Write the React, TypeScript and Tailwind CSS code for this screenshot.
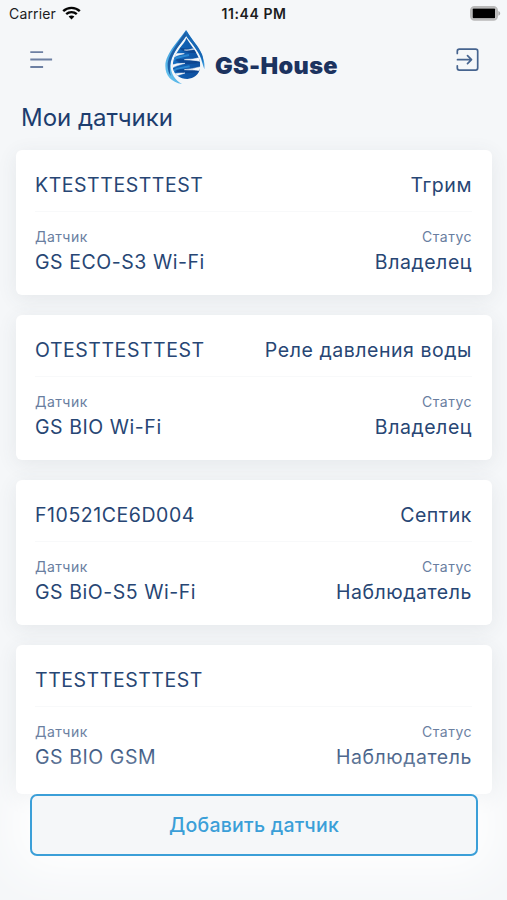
type Sensor = { id: string; name: string; model: string; status: string };

const sensors: Sensor[] = [
  { id: 'KTESTTESTTEST', name: 'Тгрим', model: 'GS ECO-S3 Wi-Fi', status: 'Владелец' },
  { id: 'OTESTTESTTEST', name: 'Реле давления воды', model: 'GS BIO Wi-Fi', status: 'Владелец' },
  { id: 'F10521CE6D004', name: 'Септик', model: 'GS BiO-S5 Wi-Fi', status: 'Наблюдатель' },
  { id: 'TTESTTESTTEST', name: '', model: 'GS BIO GSM', status: 'Наблюдатель' },
];

function StatusBar() {
  return (
    <div className="grid h-7 grid-cols-3 items-center pl-[9px] pr-[6px] text-[#1c1c1e]">
      <div className="-mt-[2px] flex items-center gap-[6px]">
        <span className="text-[14px] tracking-[0.15px]">Carrier</span>
        <svg width="19" height="14" viewBox="0 0 19 14" fill="none" stroke="#050505">
          <path d="M1.2 5.2C5.8.7 13.2.7 17.8 5.2" strokeWidth="2.4" />
          <path d="M4.2 8.2c3-2.900 7.600-2.900 10.600 0" strokeWidth="2.3" />
          <path d="M9.500 13.600 6.600 10.600c1.600-1.500 4.200-1.500 5.800 0z" fill="#050505" stroke="none" />
        </svg>
      </div>
      <span className="-mt-px mr-[2px] text-center text-[14px] font-semibold tracking-[0.6px]">11:44 PM</span>
      <svg width="31" height="15" viewBox="0 0 31 15" className="-mt-[2px] ml-auto">
        <rect x="1" y="1" width="26" height="12.800" rx="3.500" fill="#eee" stroke="#b9b9b9" strokeWidth="2" />
        <rect x="2.600" y="2.600" width="22.600" height="9.600" rx="1" fill="#000" />
        <path d="M28.400 5c2.400 1 2.400 3.800 0 4.800z" fill="#a8a8a8" />
      </svg>
    </div>
  );
}

function Logo() {
  return (
    <div className="flex items-start">
      <svg width="44" height="60" viewBox="0 0 132 180">
        <defs>
          <linearGradient id="shell" x1="0" y1="1" x2="1" y2="0">
            <stop offset="0" stopColor="#6cc8f0" />
            <stop offset="0.5" stopColor="#3a9adb" />
            <stop offset="1" stopColor="#2a86d4" />
          </linearGradient>
          <linearGradient id="core" x1="0" y1="0" x2="1" y2="0.3">
            <stop offset="0" stopColor="#1f86d6" />
            <stop offset="0.45" stopColor="#1160b2" />
            <stop offset="1" stopColor="#0d4f9f" />
          </linearGradient>
          <clipPath id="coreClip">
            <path d="M70 33c8 15 24 32 33 51 8 14 10 27 8 40-3 19-18 31-38 32-22 0-40-12-43-32-3-22 7-42 19-59 9-12 18-20 21-32z" />
          </clipPath>
        </defs>
        <path d="M69 9C52 36 7 78 7 117c0 29 18 49 50 54-20-11-34-30-34-56C23 82 53 49 70 27c18 24 40 48 47 78l7 22c6-44-32-80-55-118z" fill="url(#shell)" />
        <path d="M68 12C53 39 14 80 14 115c0 13 3 24 9 32-6-29 0-52 14-75 10-17 23-31 33-46z" fill="#1d5fa6" />
        <path d="M70 10c12 24 37 47 47 72 3 8 4 16 3 25-8-30-33-56-51-81z" fill="#1867b4" />
        <g clipPath="url(#coreClip)">
          <path d="M20 30h100v130H20z" fill="url(#core)" />
          <path d="M46 59c14 8 28 3 46 8l14 10c-20 3-50-1-60-18zM30 89c18 13 55 2 82 16-20 10-73 9-82-16zM28 122c20 11 58-2 84 8-20 13-76 13-84-8z" fill="#0a3c84" opacity="0.6" />
          <path d="M32 98c12-10 30-9 46-14M30 132c14-11 32-9 50-14" fill="none" stroke="#3ba3e8" strokeWidth="6" opacity="0.6" />
          <path d="M112 62 86 66c-6 3-14 3-22 3 8 1 20 0 28-2l20 8zM24 86c12-7 20-7 40-6-14 3-25 5-38 15zM114 91l-24 5c-8 1-20 0-26 2 14 2 30 0 50 6zM22 117c14-7 24-8 44-8-17 5-28 7-44 17zM114 119l-26 6c-8 2-16 1-24 3 16 2 30-1 50 4zM24 143c14-4 24-5 42-5-12 5-24 7-38 13z" fill="#f7f9fb" stroke="#f7f9fb" strokeWidth="1.5" />
        </g>
      </svg>
      <span className="ml-[8px] mt-[22px] text-[23.5px] leading-[34px] font-black tracking-[0.35px] text-[#1c335f]">GS-House</span>
    </div>
  );
}

function Header() {
  return (
    <header className="flex h-[66px] items-start pl-[30px] pr-[28px]">
      <svg width="23" height="20" viewBox="0 0 23 20" className="mt-[22px] text-[#6d80a3]" stroke="currentColor" strokeWidth="1.8" strokeLinecap="square">
        <path d="M1.200 2.200h11M1.200 9.500h20M1.200 17h11" />
      </svg>
      <div className="-mt-px ml-[110px]"><Logo /></div>
      <svg width="23" height="24" viewBox="0 0 23 24" className="mt-[20px] ml-auto text-[#46648f]" fill="none" stroke="currentColor" strokeWidth="1.7" strokeLinecap="round" strokeLinejoin="round">
        <path d="M1.300 5.500V3.200a2 2 0 0 1 2-2h16.400a2 2 0 0 1 2 2v16.900a2 2 0 0 1-2 2H3.300a2 2 0 0 1-2-2v-2.300" />
        <path d="M1.500 11.700h13.500M11.500 7.700l4 4-4 4" />
      </svg>
    </header>
  );
}

function SensorCard({ sensor }: { sensor: Sensor }) {
  return (
    <article className="h-[145px] shrink-0 rounded-[6px] bg-white pr-5 pl-[19px] text-[19.5px] leading-6 tracking-[0.55px] text-[#274674] shadow-[0_4px_20px_rgba(70,80,85,0.09)] last:h-[149px]">
      <div className="flex h-[62px] items-center justify-between border-b border-[#f8f9fa] pt-[9px]">
        <span>{sensor.id}</span>
        <span>{sensor.name}</span>
      </div>
      <div className="mt-[15px] flex justify-between text-[14px] leading-5 tracking-[0.5px] text-[#697e9f]">
        <span>Датчик</span>
        <span>Статус</span>
      </div>
      <div className="mt-[3px] flex justify-between">
        <span>{sensor.model}</span>
        <span>{sensor.status}</span>
      </div>
    </article>
  );
}

export default function App() {
  return (
    <div className="flex h-[900px] w-[507px] flex-col overflow-hidden bg-[#f5f7f9] font-['Inter','Noto_Sans',sans-serif]">
      <StatusBar />
      <Header />
      <h1 className="mt-[8px] h-8 pl-[21px] text-[24px] leading-8 text-[#1d3d6e]">Мои датчики</h1>
      <main className="mt-[16px] flex h-[644px] shrink-0 flex-col gap-5 pr-[15px] pl-4">
        {sensors.map((sensor) => (
          <SensorCard key={sensor.id} sensor={sensor} />
        ))}
      </main>
      <footer className="relative shrink-0 pr-[29px] pl-[30px]">
        <button className="h-[62px] w-full rounded-[7px] border-2 border-[#3b9fd8] bg-[#f5f7f9] pt-[2px] text-[19.5px] font-medium tracking-[0.25px] text-[#3b9fd8] shadow-[0_0_50px_16px_#fff]">
          Добавить датчик
        </button>
      </footer>
    </div>
  );
}
